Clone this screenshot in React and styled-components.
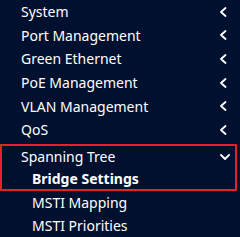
import React from "react";
import styled, { createGlobalStyle } from "styled-components";

const Global = createGlobalStyle`
  html, body {
    margin: 0;
    padding: 0;
    background: #01102f;
  }
`;

const Menu = styled.ul`
  list-style: none;
  margin: 0;
  padding: 0;
  width: 240px;
  height: 237px;
  overflow: hidden;
  background: #01102f;
  font-family: "Noto Sans", "Open Sans", sans-serif;
  font-size: 14px;
  color: #ffffff;
`;

const Item = styled.li`
  display: flex;
  align-items: center;
  justify-content: space-between;
  height: ${(p) => p.$h || 23.6}px;
  padding: 0 12px 0 ${(p) => (p.$sub ? 32 : 21)}px;
  font-weight: ${(p) => (p.$bold ? 700 : 400)};
  white-space: nowrap;
`;

const Active = styled.li`
  border: 2px solid #e8202a;
  width: 237px;
  box-sizing: border-box;
  margin-top: 2px;

  ul {
    list-style: none;
    margin: 0;
    padding: 0;
  }
  li {
    padding-left: 19px;
    padding-right: 5px;
  }
  li.sub {
    padding-left: 30px;
  }
`;

const Chevron = ({ down }) => (
  <svg width="10" height="10" viewBox="0 0 10 10" fill="none">
    <path
      d={down ? "M1 3 L5 7 L9 3" : "M7.5 1 L3 5 L7.5 9"}
      stroke="#ffffff"
      strokeWidth="1.8"
      strokeLinecap="round"
      strokeLinejoin="round"
    />
  </svg>
);

const top = [
  "System",
  "Port Management",
  "Green Ethernet",
  "PoE Management",
  "VLAN Management",
  "QoS",
];

export default function App() {
  return (
    <>
      <Global />
      <Menu>
        {top.map((t) => (
          <Item key={t}>
            <span>{t}</span>
            <Chevron />
          </Item>
        ))}
        <Active>
          <ul>
            <Item $h={22}>
              <span>Spanning Tree</span>
              <Chevron down />
            </Item>
            <Item className="sub" $sub $bold $h={21}>
              <span>Bridge Settings</span>
            </Item>
          </ul>
        </Active>
        <Item $sub>
          <span>MSTI Mapping</span>
        </Item>
        <Item $sub>
          <span>MSTI Priorities</span>
        </Item>
      </Menu>
    </>
  );
}
